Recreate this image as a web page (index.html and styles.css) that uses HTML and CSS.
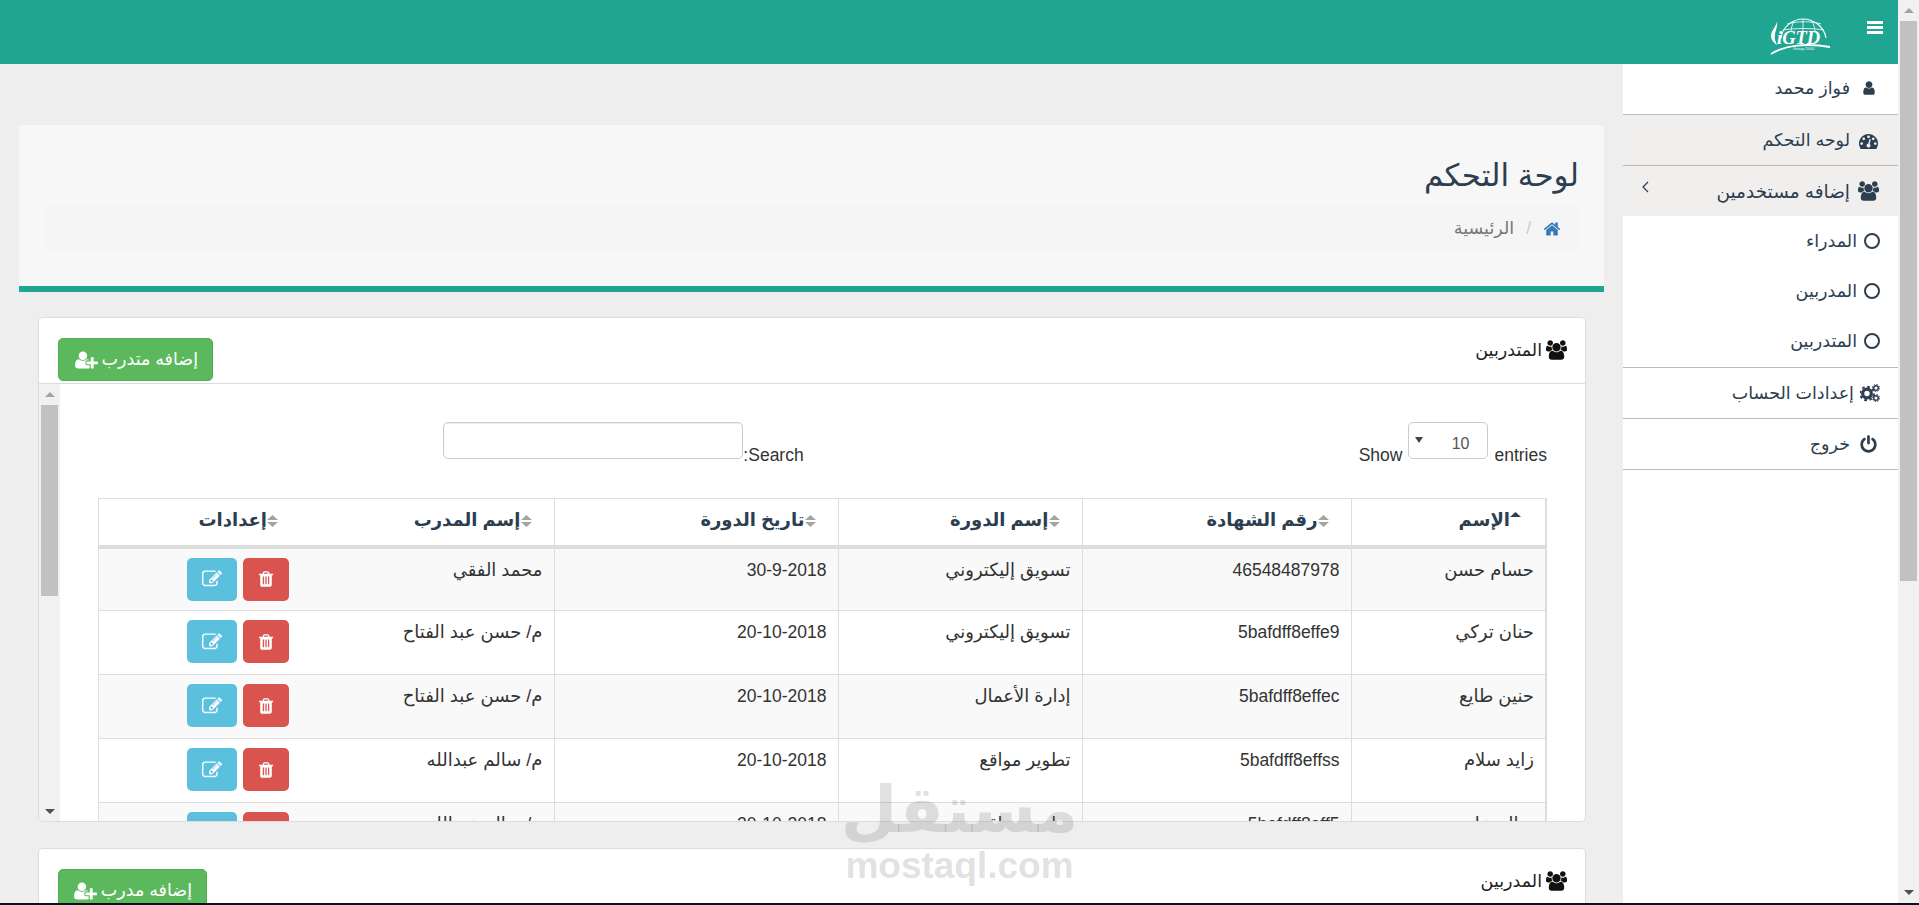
FILE: index.html
```html
<!DOCTYPE html>
<html lang="ar" dir="rtl">
<head>
<meta charset="utf-8">
<title>لوحة التحكم</title>
<link rel="stylesheet" href="styles.css">
</head>
<body>
<svg class="defs" xmlns="http://www.w3.org/2000/svg">
  <symbol id="i-user" viewBox="0 0 1792 1792"><path d="M1536 1399q0 109-62.5 187t-150.5 78h-854q-88 0-150.5-78t-62.5-187q0-85 8.5-160.5t31.5-152 58.5-131 94-89 134.5-34.5q131 128 313 128t313-128q76 0 134.5 34.5t94 89 58.5 131 31.5 152 8.5 160.5zm-256-887q0 159-112.5 271.5t-271.5 112.5-271.5-112.5-112.5-271.5 112.5-271.5 271.5-112.5 271.5 112.5 112.5 271.5z"/></symbol>
  <symbol id="i-dash" viewBox="0 0 1792 1792"><path d="M384 1184q0-53-37.5-90.5t-90.5-37.5-90.5 37.5-37.5 90.5 37.5 90.5 90.5 37.5 90.5-37.5 37.5-90.5zm192-448q0-53-37.5-90.5t-90.5-37.5-90.5 37.5-37.5 90.5 37.5 90.5 90.5 37.5 90.5-37.5 37.5-90.5zm428 481l101-382q6-26-7.5-48.5t-38.5-29.5-48 6.5-30 39.5l-101 382q-60 5-107 43.5t-63 98.5q-20 77 20 146t117 89 146-20 89-117q16-60-6-117t-72-91zm660-33q0-53-37.5-90.5t-90.5-37.5-90.5 37.5-37.5 90.5 37.5 90.5 90.5 37.5 90.5-37.5 37.5-90.5zm-640-640q0-53-37.5-90.5t-90.5-37.5-90.5 37.5-37.5 90.5 37.5 90.5 90.5 37.5 90.5-37.5 37.5-90.5zm448 192q0-53-37.5-90.5t-90.5-37.5-90.5 37.5-37.5 90.5 37.5 90.5 90.5 37.5 90.5-37.5 37.5-90.5zm320 448q0 261-141 483-19 29-54 29h-1402q-35 0-54-29-141-221-141-483 0-182 71-348t191-286 286-191 348-71 348 71 286 191 191 286 71 348z"/></symbol>
  <symbol id="i-users" viewBox="0 0 1920 1792"><path d="M593 896q-162 5-265 128h-134q-82 0-138-40.500t-56-118.500q0-353 124-353 6 0 43.500 21t97.500 42.500 119 21.500q67 0 133-23-5 37-5 66 0 139 81 256zm1071 637q0 120-73 189.500t-194 69.500h-874q-121 0-194-69.500t-73-189.500q0-53 3.500-103.500t14-109 26.500-108.500 43-97.500 62-81 85.500-53.500 111.500-20q10 0 43 21.500t73 48 107 48 135 21.500 135-21.500 107-48 73-48 43-21.500q61 0 111.500 20t85.500 53.500 62 81 43 97.500 26.500 108.500 14 109 3.500 103.500zm-1024-1277q0 106-75 181t-181 75-181-75-75-181 75-181 181-75 181 75 75 181zm704 384q0 159-112.500 271.500t-271.500 112.500-271.500-112.500-112.500-271.500 112.500-271.500 271.500-112.500 271.500 112.500 112.500 271.500zm576 225q0 78-56 118.500t-138 40.500h-134q-103-123-265-128 81-117 81-256 0-29-5-66 66 23 133 23 59 0 119-21.500t97.500-42.500 43.500-21q124 0 124 353zm-128-609q0 106-75 181t-181 75-181-75-75-181 75-181 181-75 181 75 75 181z"/></symbol>
  <symbol id="i-power" viewBox="0 0 1792 1792"><path d="M1664 896q0 156-61 298t-164 245-245 164-298 61-298-61-245-164-164-245-61-298q0-182 80.500-343t226.500-270q43-32 95.500-25t83.500 50q32 42 24.500 94.500t-49.500 84.500q-98 74-151.500 181t-53.500 228q0 104 40.500 198.500t109.500 163.500 163.500 109.500 198.500 40.500 198.500-40.500 163.500-109.500 109.500-163.500 40.500-198.500q0-121-53.500-228t-151.500-181q-42-32-49.500-84.500t24.500-94.500q31-43 84-50t95 25q146 109 226.500 270t80.500 343zm-640-768v640q0 52-38 90t-90 38-90-38-38-90v-640q0-52 38-90t90-38 90 38 38 90z"/></symbol>
  <symbol id="i-trash" viewBox="0 0 1792 1792"><path d="M704 1376v-704q0-14-9-23t-23-9h-64q-14 0-23 9t-9 23v704q0 14 9 23t23 9h64q14 0 23-9t9-23zm256 0v-704q0-14-9-23t-23-9h-64q-14 0-23 9t-9 23v704q0 14 9 23t23 9h64q14 0 23-9t9-23zm256 0v-704q0-14-9-23t-23-9h-64q-14 0-23 9t-9 23v704q0 14 9 23t23 9h64q14 0 23-9t9-23zm-544-992h448l-48-117q-7-9-17-11h-317q-10 2-17 11zm928 32v64q0 14-9 23t-23 9h-96v948q0 83-47 143.500t-113 60.500h-832q-66 0-113-58.500t-47-141.500v-952h-96q-14 0-23-9t-9-23v-64q0-14 9-23t23-9h309l70-167q15-37 54-63t79-26h320q40 0 79 26t54 63l70 167h309q14 0 23 9t9 23z"/></symbol>
  <symbol id="i-edit" viewBox="0 0 1792 1792"><path d="M888 1184l116-116-152-152-116 116v56h96v96h56zm440-720q-16-16-33 1l-350 350q-17 17-1 33t33-1l350-350q17-17 1-33zm80 594v190q0 119-84.500 203.500t-203.500 84.500h-832q-119 0-203.500-84.500t-84.500-203.500v-832q0-119 84.500-203.500t203.500-84.500h832q63 0 117 25 15 7 18 23 3 17-9 29l-49 49q-14 14-32 8-23-6-45-6h-832q-66 0-113 47t-47 113v832q0 66 47 113t113 47h832q66 0 113-47t47-113v-126q0-13 9-22l64-64q15-15 35-7t20 29zm-96-738l288 288-672 672h-288v-288zm444 132l-92 92-288-288 92-92q28-28 68-28t68 28l152 152q28 28 28 68t-28 68z"/></symbol>
  <symbol id="i-home" viewBox="0 0 1792 1792"><path d="M1472 992v480q0 26-19 45t-45 19h-384v-384h-256v384h-384q-26 0-45-19t-19-45v-480q0-1 .5-3t.5-3l575-474 575 474q1 2 1 6zm223-69l-62 74q-8 9-21 11h-3q-13 0-21-7l-692-577-692 577q-12 8-24 7-13-2-21-11l-62-74q-8-10-7-23.500t11-21.500l719-599q32-26 76-26t76 26l244 204v-195q0-14 9-23t23-9h192q14 0 23 9t9 23v408l219 182q10 8 11 21.500t-7 23.500z"/></symbol>
  <symbol id="i-uplus" viewBox="0 0 2048 1792"><path d="M704 896q-159 0-271.500-112.500t-112.500-271.500 112.500-271.500 271.500-112.500 271.500 112.500 112.500 271.500-112.500 271.500-271.500 112.500zm960 128h352q13 0 22.500 9.500t9.500 22.500v192q0 13-9.500 22.500t-22.500 9.500h-352v352q0 13-9.500 22.500t-22.500 9.500h-192q-13 0-22.500-9.500t-9.500-22.500v-352h-352q-13 0-22.500-9.500t-9.500-22.500v-192q0-13 9.500-22.500t22.500-9.500h352v-352q0-13 9.500-22.500t22.500-9.500h192q13 0 22.500 9.500t9.500 22.500v352zm-736 224q0 52 38 90t90 38h256v238q-68 50-171 50h-874q-121 0-194-69t-73-190q0-53 3.500-103.500t14-109 26.500-108.500 43-97.500 62-81 85.500-53.500 111.500-20q19 0 39 17 79 61 154.500 91.500t164.500 30.500 164.500-30.500 154.500-91.500q20-17 39-17 132 0 217 96h-223q-52 0-90 38t-38 90v192z"/></symbol>
  <symbol id="i-cogs" viewBox="0 0 20 18">
    <circle cx="7" cy="9.500" r="4.300" fill="none" stroke="currentColor" stroke-width="3.200"/>
    <circle cx="7" cy="9.500" r="6.800" fill="none" stroke="currentColor" stroke-width="2" stroke-dasharray="2.700 2.640"/>
    <circle cx="16" cy="4" r="2.300" fill="none" stroke="currentColor" stroke-width="1.500"/>
    <circle cx="16" cy="4" r="3.600" fill="none" stroke="currentColor" stroke-width="1" stroke-dasharray="1.400 1.430"/>
    <circle cx="16" cy="14" r="2.300" fill="none" stroke="currentColor" stroke-width="1.500"/>
    <circle cx="16" cy="14" r="3.600" fill="none" stroke="currentColor" stroke-width="1" stroke-dasharray="1.400 1.430"/>
  </symbol>
  <symbol id="i-sort" viewBox="0 0 11 12"><path d="M5.500 0L11 5H0zM0 7h11l-5.500 5z"/></symbol>
  <symbol id="i-asc" viewBox="0 0 11 12"><path d="M5.500 0L11 5H0z"/></symbol>
</svg>

<div class="screen">
  <div class="window">
    <div class="pagebar">
      <span class="sb-cap"><i class="tri-up"></i></span>
      <span class="thumb thumb-page"></span>
      <span class="sb-fill"></span>
      <span class="sb-cap"><i class="tri-down"></i></span>
    </div>
    <div class="app">
      <header class="topbar">
        <span class="burger"><i></i><i></i><i></i></span>
        <svg class="logo" viewBox="0 0 62 38" xmlns="http://www.w3.org/2000/svg">
          <g fill="none" stroke="#fff">
            <path d="M11 20C12 9 23 1 33 1s21 7 23 19" stroke-width="1.200"/>
            <path d="M17 6c10-3 25-3 34 0M13 12c12-2 30-2 41 0" stroke-width=".8"/>
            <path d="M33 1v14M24 3c-2 4-3 8-3 11M42 3c2 4 3 8 3 11" stroke-width=".8"/>
            <path d="M1 36c14-9 36-11 59-7" stroke-width="1.800"/>
          </g>
          <path d="M7 3c0 5-6 9-6 15 0 4 3 7 6 9-1-3-3-6-2-10 0-4 3-8 2-14z" fill="#fff"/>
          <text class="logo-word" x="7" y="26">iGTD</text>
          <text class="logo-small" x="23" y="32">Group 2000</text>
        </svg>
      </header>
      <div class="body-row">
        <aside class="side">
          <div class="side-item side-first"><span class="side-ic"><svg class="ic ic-user"><use href="#i-user"/></svg></span><span>فواز محمد</span></div>
          <div class="side-item is-alt"><span class="side-ic"><svg class="ic ic-19"><use href="#i-dash"/></svg></span><span>لوحه التحكم</span></div>
          <div class="side-item is-alt is-open"><span class="side-ic"><svg class="ic ic-users"><use href="#i-users"/></svg></span><span>إضافه مستخدمين</span>
            <svg class="chev" viewBox="0 0 7 12"><path d="M6 1L1 6l5 5" fill="none" stroke="currentColor" stroke-width="1.200"/></svg></div>
          <div class="side-sub">
            <div class="sub-item"><i class="ring"></i><span>المدراء</span></div>
            <div class="sub-item"><i class="ring"></i><span>المدربين</span></div>
            <div class="sub-item"><i class="ring"></i><span>المتدربين</span></div>
          </div>
          <div class="side-item side-cog"><svg class="ic ic-cog"><use href="#i-cogs"/></svg><span>إعدادات الحساب</span></div>
          <div class="side-item"><span class="side-ic"><svg class="ic ic-17"><use href="#i-power"/></svg></span><span>خروج</span></div>
        </aside>

        <main class="main">
          <section class="hero">
            <h1 class="hero-title">لوحة التحكم</h1>
            <nav class="crumb">
              <svg class="ic ic-home"><use href="#i-home"/></svg>
              <span class="crumb-sep">/</span>
              <span class="crumb-cur">الرئيسية</span>
            </nav>
          </section>

          <section class="card card-tall">
            <div class="card-head">
              <div class="card-title"><svg class="ic ic-title"><use href="#i-users"/></svg><span>المتدربين</span></div>
              <button class="btn-add btn-a"><span>إضافه متدرب</span><svg class="ic ic-plus"><use href="#i-uplus"/></svg></button>
            </div>
            <div class="card-body">
              <div class="scroller">
                <div class="controls">
                  <div class="ctl ctl-len">
                    <span>entries</span>
                    <span class="select"><span class="select-val">10</span><i class="select-tri"></i></span>
                    <span>Show</span>
                  </div>
                  <div class="ctl">
                    <span>Search:</span>
                    <span class="search"></span>
                  </div>
                </div>
                <table class="grid">
                  <colgroup><col class="c1"><col class="c2"><col class="c3"><col class="c4"><col class="c5"><col class="c6"></colgroup>
                  <thead>
                    <tr>
                      <th class="th-first"><svg class="sort sort-on"><use href="#i-asc"/></svg><span>الإسم</span></th>
                      <th><svg class="sort"><use href="#i-sort"/></svg><span>رقم الشهادة</span></th>
                      <th><svg class="sort"><use href="#i-sort"/></svg><span>إسم الدورة</span></th>
                      <th><svg class="sort"><use href="#i-sort"/></svg><span>تاريخ الدورة</span></th>
                      <th class="no-end"><svg class="sort"><use href="#i-sort"/></svg><span>إسم المدرب</span></th>
                      <th><svg class="sort"><use href="#i-sort"/></svg><span>إعدادات</span></th>
                    </tr>
                  </thead>
                  <tbody>
                    <tr class="odd"><td>حسام حسن</td><td class="lat">46548487978</td><td>تسويق إليكتروني</td><td class="lat">30-9-2018</td><td class="no-end">محمد الفقي</td><td><div class="acts"><span class="act act-del"><svg class="ic ic-14"><use href="#i-trash"/></svg></span><span class="act act-edit"><svg class="ic ic-18"><use href="#i-edit"/></svg></span></div></td></tr>
                    <tr><td>حنان تركي</td><td class="lat">5bafdff8effe9</td><td>تسويق إليكتروني</td><td class="lat">20-10-2018</td><td class="no-end">م/ حسن عبد الفتاح</td><td><div class="acts"><span class="act act-del"><svg class="ic ic-14"><use href="#i-trash"/></svg></span><span class="act act-edit"><svg class="ic ic-18"><use href="#i-edit"/></svg></span></div></td></tr>
                    <tr class="odd"><td>حنين طايع</td><td class="lat">5bafdff8effec</td><td>إدارة الأعمال</td><td class="lat">20-10-2018</td><td class="no-end">م/ حسن عبد الفتاح</td><td><div class="acts"><span class="act act-del"><svg class="ic ic-14"><use href="#i-trash"/></svg></span><span class="act act-edit"><svg class="ic ic-18"><use href="#i-edit"/></svg></span></div></td></tr>
                    <tr><td>زايد سلام</td><td class="lat">5bafdff8effss</td><td>تطوير مواقع</td><td class="lat">20-10-2018</td><td class="no-end">م/ سالم عبدالله</td><td><div class="acts"><span class="act act-del"><svg class="ic ic-14"><use href="#i-trash"/></svg></span><span class="act act-edit"><svg class="ic ic-18"><use href="#i-edit"/></svg></span></div></td></tr>
                    <tr class="odd"><td>سالم علي</td><td class="lat">5bafdff8eff5</td><td>تطوير مواقع</td><td class="lat">20-10-2018</td><td class="no-end">م/ سالم عبدالله</td><td><div class="acts"><span class="act act-del"><svg class="ic ic-14"><use href="#i-trash"/></svg></span><span class="act act-edit"><svg class="ic ic-18"><use href="#i-edit"/></svg></span></div></td></tr>
                  </tbody>
                </table>
              </div>
              <div class="innerbar">
                <span class="sb-cap"><i class="tri-up"></i></span>
                <span class="thumb thumb-inner"></span>
                <span class="sb-fill"></span>
                <span class="sb-cap"><i class="tri-down"></i></span>
              </div>
            </div>
          </section>

          <section class="card">
            <div class="card-head">
              <div class="card-title"><svg class="ic ic-title"><use href="#i-users"/></svg><span>المدربين</span></div>
              <button class="btn-add btn-b"><span>إضافه مدرب</span><svg class="ic ic-plus"><use href="#i-uplus"/></svg></button>
            </div>
          </section>
        </main>
      </div>
    </div>
  </div>
  <div class="taskbar"></div>
  <div class="watermark">
    <div class="wm-ar">مستقل</div>
    <div class="wm-en" dir="ltr">mostaql.com</div>
  </div>
</div>
</body>
</html>
```
FILE: styles.css
```css
* { box-sizing: border-box; }
html, body { margin: 0; padding: 0; height: 905px; overflow: hidden; }
body {
  font-family: "Liberation Sans", "DejaVu Sans", sans-serif;
  font-size: 17.5px;
  line-height: 25px;
  color: #333;
  background: #eee;
}
.defs { display: none; }
.ic { display: block; fill: currentColor; flex: none; }

.screen { position: relative; width: 1919px; height: 905px; display: flex; flex-direction: column; overflow: hidden; }
.window { display: flex; height: 903px; flex: none; }
.taskbar { height: 2px; background: #0b0f19; flex: none; }

/* scrollbars */
.pagebar, .innerbar { width: 21px; flex: none; background: #f1f1f1; display: flex; flex-direction: column; }
.sb-cap { height: 21px; flex: none; display: flex; align-items: center; justify-content: center; }
.sb-fill { flex: 1; }
.thumb { margin: 0 2px; background: #c1c1c1; flex: none; }
.thumb-page { height: 560px; }
.thumb-inner { height: 191px; }
.tri-up, .tri-down { display: block; width: 0; height: 0; border-left: 5px solid transparent; border-right: 5px solid transparent; }
.tri-up { border-bottom: 5px solid #a3a3a3; }
.tri-down { border-top: 5px solid #505050; }

/* top bar */
.app { flex: 1; min-width: 0; display: flex; flex-direction: column; }
.topbar { height: 64px; flex: none; background: #1fa592; display: flex; align-items: flex-start; padding-right: 15px; }
.burger { width: 16px; margin-top: 21px; display: flex; flex-direction: column; gap: 2px; }
.burger i { display: block; height: 3px; background: #fff; }
.logo { width: 62px; height: 38px; margin-top: 18px; margin-right: 35px; flex: none; }
.logo-word { font-family: "Liberation Serif", serif; font-style: italic; font-weight: 700; font-size: 18.500px; fill: #fff; direction: ltr; unicode-bidi: bidi-override; }
.logo-small { font-family: "Liberation Sans", sans-serif; font-size: 4px; fill: #fff; direction: ltr; unicode-bidi: bidi-override; }

.body-row { flex: 1; min-height: 0; display: flex; }

/* sidebar */
.side { width: 275px; flex: none; background: #fff; color: #2c3e50; }
.side-item { height: 51px; padding-right: 19px; display: flex; align-items: center; gap: 8px; border-bottom: 1px solid #bbb; }
.side-first { padding-bottom: 2px; }
.side-item.is-alt { background: #f0efee; }
.side-item.is-open { height: 50px; border-bottom: 0; font-size: 18.500px; }
.side-ic { width: 21px; flex: none; display: flex; justify-content: center; }
.ic-user { width: 16px; height: 16px; }
.ic-19 { width: 19px; height: 19px; }
.ic-users { width: 21px; height: 20px; }
.ic-17 { width: 19px; height: 19px; }
.chev { width: 7px; height: 12px; margin-right: auto; margin-left: 19px; margin-top: -8px; }
.side-sub { height: 152px; border-bottom: 1px solid #bbb; }
.sub-item { height: 50px; padding-right: 18px; display: flex; align-items: center; gap: 7px; }
.ring { display: block; flex: none; width: 16px; height: 16px; border: 2px solid #2c3e50; border-radius: 50%; }
.side-cog { padding-right: 18px; gap: 6px; }
.ic-cog { width: 20px; height: 18px; }

/* main */
.main { flex: 1; min-width: 0; padding: 61px 19px 0; overflow: hidden; }
.hero { height: 167px; padding: 34px 25px 0; background: #f7f7f7; border-bottom: 6px solid #1fa592; border-radius: 4px 4px 0 0; margin-bottom: 25px; }
.hero-title { margin: 0 0 14px; font-size: 31px; line-height: 33px; font-weight: 400; color: #2c3e50; }
.crumb { height: 45px; padding: 0 18px; background: #f5f5f5; border-radius: 5px; display: flex; align-items: center; }
.ic-home { width: 18px; height: 18px; color: #337ab7; }
.crumb-sep { margin-right: 12px; color: #ccc; }
.crumb-cur { margin-right: 12px; color: #777; }

.card { margin: 0 18px 26px 19px; background: #fff; border: 1px solid #ddd; border-radius: 5px 5px 0 0; }
.card-tall { height: 505px; border-radius: 5px; overflow: hidden; }
.card-head { height: 66px; padding: 20px 18px 0 19px; display: flex; justify-content: space-between; align-items: flex-start; border-bottom: 1px solid #ddd; }
.card-title { display: flex; align-items: center; gap: 4px; height: 24px; color: #222; }
.ic-title { width: 21px; height: 20px; color: #111; }
.btn-add { height: 43px; padding: 0 14px; font: inherit; color: #fff; background: #5cb85c; border: 1px solid #4cae4c; border-radius: 5px; display: flex; align-items: center; gap: 4px; }
.btn-a { width: 155px; }
.btn-b { width: 149px; }
.ic-plus { width: 23px; height: 20px; }

.card-body { height: 438px; display: flex; }
.scroller { flex: 1; min-width: 0; padding-right: 38px; padding-left: 38px; overflow: hidden; }
.controls { margin-top: 38px; display: flex; gap: 555px; color: #333; }
.ctl { display: flex; align-items: flex-end; height: 46px; }
.ctl-len { gap: 6px; }
.select { align-self: flex-start; position: relative; width: 80px; height: 37px; border: 1px solid #ccc; border-radius: 5px; display: block; text-align: right; padding-right: 18px; font-size: 16px; line-height: 42px; color: #555; background: #fff; }
.select-val { display: inline-block; }
.select-tri { position: absolute; left: 6px; top: 14px; width: 0; height: 0; border-left: 4px solid transparent; border-right: 4px solid transparent; border-top: 6px solid #444; }
.search { align-self: flex-start; width: 300px; height: 37px; border: 1px solid #ccc; border-radius: 5px; background: #fff; display: block; box-shadow: inset 0 1px 1px rgba(0,0,0,.075); }

.grid { margin-top: 30px; width: 1448px; table-layout: fixed; border-collapse: collapse; color: #333; font-size: 18px; }
.c1 { width: 195px; } .c2 { width: 269px; } .c3 { width: 244px; } .c4 { width: 284px; } .c5 { width: 254px; } .c6 { width: 202px; }
.grid th { height: 48px; padding: 0 22px 2px 10px; text-align: right; font-weight: 700; color: #2c3e50; border: 1px solid #ddd; border-bottom: 4px solid #ddd; white-space: nowrap; }
.grid th.th-first { padding-right: 24px; border-right-width: 2px; }
.grid td { height: 64px; padding: 9px 11px 0; vertical-align: top; border: 1px solid #ddd; white-space: nowrap; }
.grid td.lat { font-size: 17.5px; }
.grid td:first-child { border-right-width: 2px; }
.grid tr.odd td { background: #f9f9f9; }
.grid th.no-end, .grid td.no-end { border-left: 0; }
.grid th:last-child, .grid td:last-child { border-right: 0; }
.sort { display: inline-block; width: 11px; height: 12px; fill: #a5a5a0; vertical-align: -1px; }
.sort-on { fill: #2c3e50; vertical-align: 2px; }
.acts { display: flex; gap: 6px; }
.act { height: 43px; border-radius: 5px; display: flex; align-items: center; justify-content: center; color: #fff; flex: none; }
.act-del { width: 46px; background: #d9534f; }
.act-edit { width: 50px; background: #5bc0de; }
.ic-14 { width: 18px; height: 18px; }
.ic-18 { width: 20px; height: 20px; }

/* watermark */
.watermark { position: absolute; left: 843px; top: 768px; width: 233px; pointer-events: none; color: rgba(105,105,105,.2); display: flex; flex-direction: column; align-items: center; }
.wm-ar { font-family: "DejaVu Sans", sans-serif; font-weight: 700; font-size: 65px; line-height: 84px; white-space: nowrap; }
.wm-en { font-weight: 700; font-size: 37px; line-height: 28px; }
```
